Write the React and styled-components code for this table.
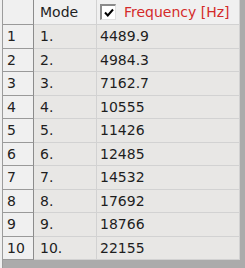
import React from 'react'
import styled, { createGlobalStyle } from 'styled-components'

const Global = createGlobalStyle`
  html, body { margin: 0; padding: 0; background: #f0f0f0; }
  body { font-family: "DejaVu Sans", "Liberation Sans", sans-serif; }
`

const Frame = styled.div`
  width: 242px;
  height: 268px;
  margin-left: 2px;
  border-left: 1px solid #9c9c9c;
  background: #ababab;
  overflow: hidden;
`

const Grid = styled.div`
  width: 237px;
  display: grid;
  grid-template-columns: 31px 63px 143px;
  grid-template-rows: 25px repeat(10, 23.5px);
  font-size: 14px;
  color: #1e1e1e;
`

const Cell = styled.div`
  display: flex;
  align-items: center;
  padding-left: ${p => p.$pad || 6}px;
  box-sizing: border-box;
  background: ${p => (p.$head ? '#f0f0f0' : '#e8e7e5')};
  border-right: 1px solid ${p => (p.$index ? '#8c8c8c' : '#d2d2d2')};
  border-bottom: 1px solid ${p => (p.$index ? '#9a9a9a' : '#d2d2d2')};
  white-space: nowrap;
  overflow: hidden;
`

const IndexCell = styled(Cell)`
  background: #f0f0f0;
  color: #222;
`

const FreqHead = styled(Cell)`
  color: #d42a2a;
  gap: 8px;
`

const Check = styled.span`
  width: 16px;
  height: 16px;
  flex: none;
  box-sizing: border-box;
  background: #fff;
  border-top: 2px solid #8a8a8a;
  border-left: 2px solid #8a8a8a;
  border-right: 1px solid #e0e0e0;
  border-bottom: 1px solid #e0e0e0;
  display: flex;
  align-items: center;
  justify-content: center;
`

const rows = ['4489.9', '4984.3', '7162.7', '10555', '11426', '12485', '14532', '17692', '18766', '22155']

export default function App() {
  return (
    <>
      <Global />
      <Frame>
        <Grid>
          <IndexCell $head $index />
          <Cell $head $pad={6}>Mode</Cell>
          <FreqHead $head $pad={3}>
            <Check>
              <svg width="10" height="9" viewBox="0 0 10 9">
                <path d="M1 4.5 L3.8 7.5 L9 1.5" fill="none" stroke="#000" strokeWidth="2" />
              </svg>
            </Check>
            Frequency [Hz]
          </FreqHead>
          {rows.map((f, i) => (
            <React.Fragment key={i}>
              <IndexCell $index $pad={4}>{i + 1}</IndexCell>
              <Cell $pad={6}>{i + 1}.</Cell>
              <Cell $pad={3}>{f}</Cell>
            </React.Fragment>
          ))}
        </Grid>
      </Frame>
    </>
  )
}
